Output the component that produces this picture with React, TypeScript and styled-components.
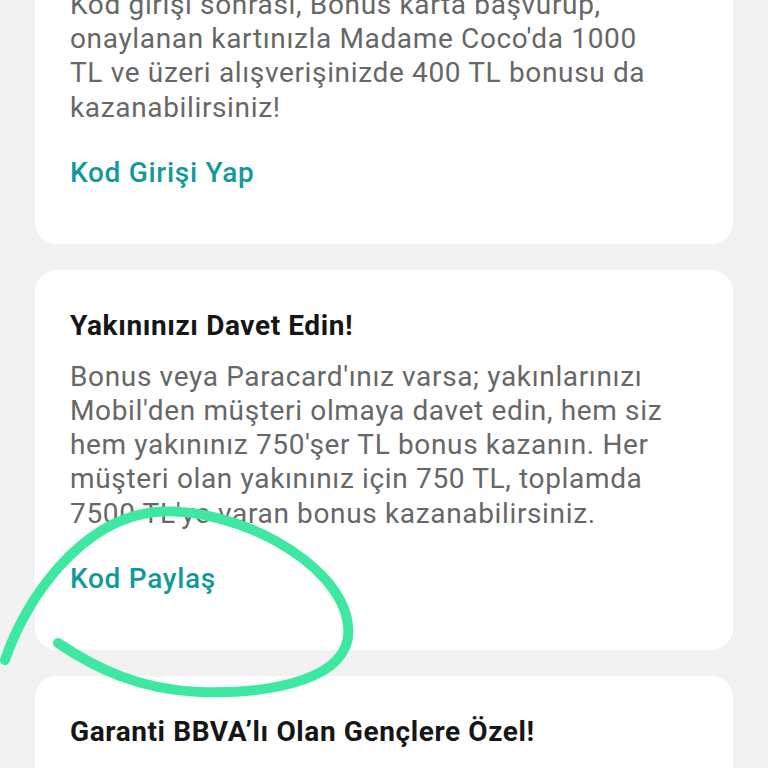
import React from "react";
import styled, { createGlobalStyle } from "styled-components";

const Global = createGlobalStyle`
  html, body {
    margin: 0;
    padding: 0;
    background: #f2f2f2;
    font-family: Roboto, "Noto Sans", "Liberation Sans", sans-serif;
    overflow: hidden;
  }
`;

const Page = styled.div`
  position: relative;
  width: 768px;
  height: 768px;
  overflow: hidden;
  background: #f2f2f2;
`;

const List = styled.div`
  display: flex;
  flex-direction: column;
  gap: 26px;
  padding: 0 35px;
  margin-top: -102px;
`;

const Card = styled.section`
  background: #ffffff;
  border-radius: 22px;
  padding: 39px 63px 54px 35px;
  display: flex;
  flex-direction: column;
`;

const Title = styled.h3`
  margin: 0 0 17px;
  font-size: 28px;
  line-height: 34px;
  font-weight: 700;
  color: #161616;
  letter-spacing: 0.6px;
`;

const Body = styled.p`
  margin: 0;
  font-size: 28px;
  line-height: 34.2px;
  font-weight: 400;
  color: #676767;
  letter-spacing: 0.65px;
`;

const LinkText = styled.a`
  margin-top: 31px;
  font-size: 28px;
  line-height: 34px;
  font-weight: 500;
  color: #14999a;
  text-decoration: none;
  letter-spacing: 0.7px;
`;

const Scribble = styled.svg`
  position: absolute;
  left: 0;
  top: 0;
  pointer-events: none;
`;

export default function App() {
  return (
    <Page>
      <Global />
      <List>
        <Card>
          <Title>Madame Coco'da Bonus Fırsatı!</Title>
          <Body>
            Kod girişi sonrası, Bonus karta başvurup, onaylanan kartınızla
            Madame Coco'da 1000 TL ve üzeri alışverişinizde 400 TL bonusu da
            kazanabilirsiniz!
          </Body>
          <LinkText>Kod Girişi Yap</LinkText>
        </Card>
        <Card>
          <Title>Yakınınızı Davet Edin!</Title>
          <Body>
            Bonus veya Paracard'ınız varsa; yakınlarınızı Mobil'den müşteri
            olmaya davet edin, hem siz hem yakınınız 750'şer TL bonus kazanın.
            Her müşteri olan yakınınız için 750 TL, toplamda 7500 TL'ye varan
            bonus kazanabilirsiniz.
          </Body>
          <LinkText>Kod Paylaş</LinkText>
        </Card>
        <Card>
          <Title>Garanti BBVA’lı Olan Gençlere Özel!</Title>
          <Body>
            Bonus Genç kartlarınızla yapacağınız alışverişlerde ekstra bonus
            kazanma fırsatı sizi bekliyor.
          </Body>
        </Card>
      </List>
      <Scribble width="768" height="768" viewBox="0 0 768 768">
        <path
          d="M5,660 C25,600 80,520 155,512 C230,505 340,560 348,625 C355,680 270,694 200,692 C140,690 95,668 58,643"
          fill="none"
          stroke="#3fe8a0"
          strokeWidth="10"
          strokeLinecap="round"
        />
      </Scribble>
    </Page>
  );
}
